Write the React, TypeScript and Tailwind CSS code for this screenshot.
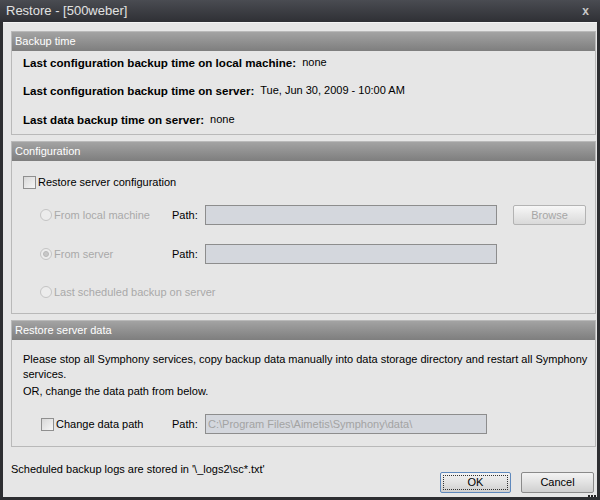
import React from "react";

const FONT = "font-['Liberation_Sans',Arial,sans-serif]";

function GroupBox({ title, children, className = "" }: { title: string; children: React.ReactNode; className?: string }) {
  return (
    <div className={`border border-[#b9b9b9] bg-[#e6e6e6] ${className}`}>
      <div className="h-[19px] bg-gradient-to-b from-[#a3a3a3] to-[#7e7e7e] text-white text-[11px] leading-[19px] pl-[3px]">
        {title}
      </div>
      {children}
    </div>
  );
}

function Checkbox() {
  return (
    <span className="inline-block w-[13px] h-[13px] border border-[#8f8f8f] bg-gradient-to-br from-[#d8d8d8] to-[#f6f6f6] shrink-0" />
  );
}

function Radio({ checked = false }: { checked?: boolean }) {
  return (
    <span className="relative inline-flex items-center justify-center w-[12px] h-[12px] rounded-full border border-[#c4c4c4] bg-[#ececec] shrink-0">
      {checked && <span className="w-[6px] h-[6px] rounded-full bg-[#c8c8c8] border border-[#b8b8b8]" />}
    </span>
  );
}

function Input({ width, text }: { width: number; text?: string }) {
  return (
    <div
      className="h-[20px] border border-[#8d8d8d] bg-[#d4d7dd] text-[#a3a3a3] text-[11px] leading-[18px] pl-[2px] whitespace-nowrap overflow-hidden"
      style={{ width }}
    >
      {text}
    </div>
  );
}

function InfoRow({ label, value, className = "" }: { label: string; value: string; className?: string }) {
  return (
    <div className={`h-[15px] flex items-center whitespace-nowrap ${className}`}>
      <b className="text-[11.6px] leading-[15px]">{label}</b>
      <span className="ml-[6px] leading-[15px]">{value}</span>
    </div>
  );
}

export default function App() {
  return (
    <div className={`w-[600px] h-[500px] flex flex-col bg-[#2d2e31] ${FONT} text-[11px] text-black`}>
      {/* Title bar */}
      <div className="h-[22px] flex items-center justify-between bg-gradient-to-b from-[#4a4c52] to-[#2f3035] px-[6px]">
        <span className="text-[#e2e2e2] text-[13px] leading-[22px]">Restore - [500weber]</span>
        <span className="text-[#c8c8c8] text-[12px] font-bold leading-[22px] mr-[5px]">x</span>
      </div>
      {/* Body */}
      <div className="flex-1 mx-[3px] mb-[3px] bg-[#e6e6e6] border-t border-[#f4f4f4] flex flex-col pl-[8px] pr-[1px] pt-[8px] relative">
        <GroupBox title="Backup time" className="h-[104px]">
          <div className="flex flex-col pl-[11px] pt-[4px]">
            <InfoRow label="Last configuration backup time on local machine:" value="none" />
            <InfoRow className="mt-[13px]" label="Last configuration backup time on server:" value="Tue, Jun 30, 2009 - 10:00 AM" />
            <InfoRow className="mt-[14px]" label="Last data backup time on server:" value="none" />
          </div>
        </GroupBox>

        <GroupBox title="Configuration" className="mt-[6px] h-[173px]">
          <div className="pl-[11px] pt-[14px]">
            <div className="flex items-center gap-[2px] h-[14px]">
              <Checkbox />
              <span className="leading-[14px]">Restore server configuration</span>
            </div>
            <div className="flex items-center h-[20px] mt-[16px] pl-[17px]">
              <div className="w-[132px] flex items-center gap-[2px] text-[#a9a9a9]">
                <Radio />
                <span>From local machine</span>
              </div>
              <span className="w-[33px]">Path:</span>
              <Input width={292} />
              <div className="ml-[16px] w-[73px] h-[20px] border border-[#b3b3b3] rounded-[2px] bg-gradient-to-b from-[#f7f7f7] via-[#e8e8e8] to-[#d9d9d9] text-[#a6a6a6] text-center leading-[18px]">
                Browse
              </div>
            </div>
            <div className="flex items-center h-[20px] mt-[19px] pl-[17px]">
              <div className="w-[132px] flex items-center gap-[2px] text-[#a9a9a9]">
                <Radio checked />
                <span>From server</span>
              </div>
              <span className="w-[33px]">Path:</span>
              <Input width={292} />
            </div>
            <div className="flex items-center h-[14px] mt-[21px] pl-[17px] text-[#a9a9a9] gap-[2px]">
              <Radio />
              <span>Last scheduled backup on server</span>
            </div>
          </div>
        </GroupBox>

        <GroupBox title="Restore server data" className="mt-[6px] h-[127px]">
          <div className="pl-[11px] pr-[2px] pt-[12px]">
            <div className="leading-[15px]">
              Please stop all Symphony services, copy backup data manually into data storage directory and restart all Symphony services.
            </div>
            <div className="leading-[15px] mt-[2px]">OR, change the data path from below.</div>
            <div className="flex items-center h-[20px] mt-[15px] pl-[18px]">
              <div className="w-[131px] flex items-center gap-[2px]">
                <Checkbox />
                <span>Change data path</span>
              </div>
              <span className="w-[33px]">Path:</span>
              <Input width={282} text="C:\Program Files\Aimetis\Symphony\data\" />
            </div>
          </div>
        </GroupBox>

        <div className="flex justify-between pr-[2px] mt-[15px]">
          <span className="leading-[14px]">Scheduled backup logs are stored in '\_logs2\sc*.txt'</span>
          <div className="flex gap-[10px] mt-[10px]">
            <div className="w-[71px] h-[21px] border border-[#5f89bd] rounded-[2px] bg-gradient-to-b from-[#f3f3f3] via-[#e2e2e2] to-[#cfcfcf] p-[2px]">
              <div className="w-full h-full border border-dotted border-[#333] text-center leading-[13px]">OK</div>
            </div>
            <div className="w-[73px] h-[21px] border border-[#8a8a8a] rounded-[2px] bg-gradient-to-b from-[#f3f3f3] via-[#e2e2e2] to-[#cfcfcf] text-center leading-[19px]">
              Cancel
            </div>
          </div>
        </div>
        <div className="absolute right-[1px] bottom-[0px] flex gap-[1px]">
          <span className="w-[2px] h-[2px] bg-[#222]" />
          <span className="w-[2px] h-[2px] bg-[#222]" />
          <span className="w-[2px] h-[2px] bg-[#222]" />
        </div>
      </div>
    </div>
  );
}
